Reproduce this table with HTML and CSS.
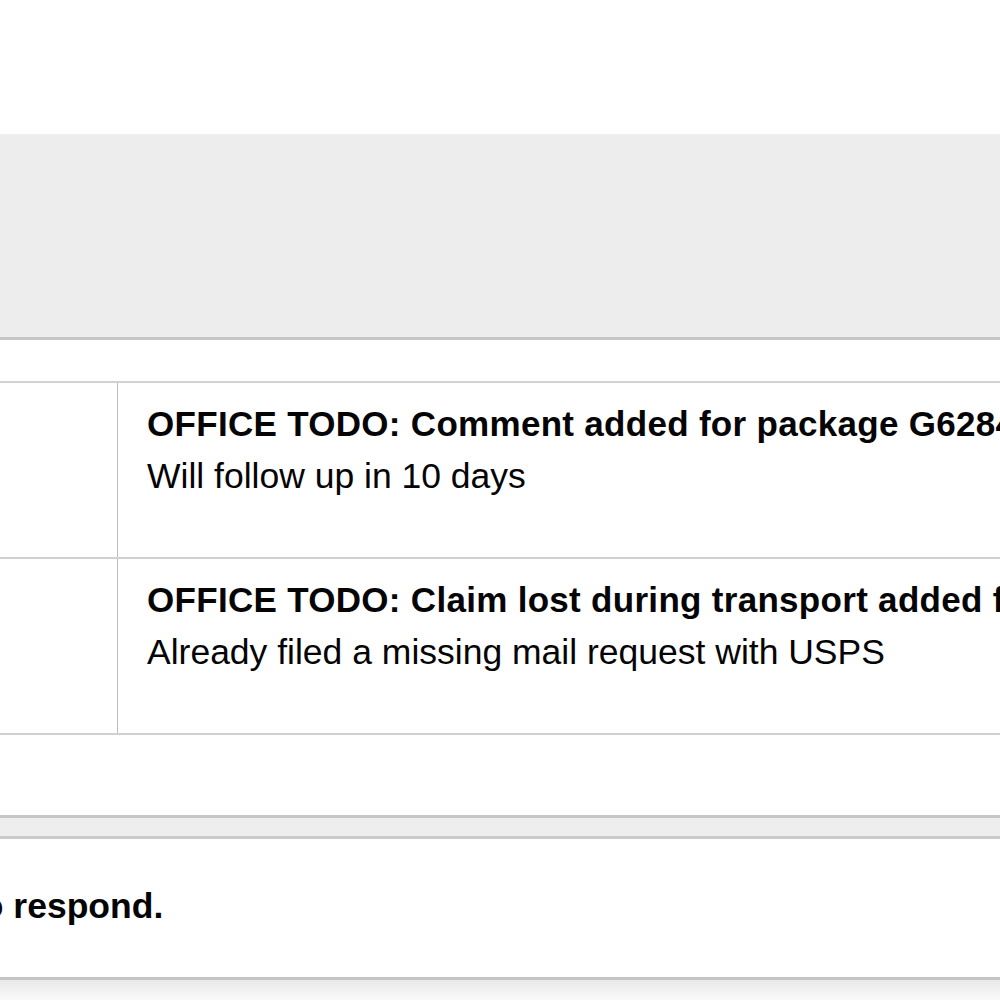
FILE: index.html
```html
<!DOCTYPE html>
<html lang="en">
<head>
  <meta charset="UTF-8">
  <meta name="viewport" content="width=device-width, initial-scale=1.0">
  <title>Office todo</title>
  <link rel="stylesheet" href="styles.css">
</head>
<body>
  <div class="page">
    <div class="top_space"></div>
    <header class="head_bar"></header>

    <section class="todo_list">
      <div class="todo_row">
        <div class="todo_side"></div>
        <div class="todo_body">
          <p class="todo_title">OFFICE TODO: Comment added for package G62847310</p>
          <p class="todo_text">Will follow up in 10 days</p>
        </div>
      </div>
      <div class="todo_row">
        <div class="todo_side"></div>
        <div class="todo_body">
          <p class="todo_title">OFFICE TODO: Claim lost during transport added for package G62847310</p>
          <p class="todo_text">Already filed a missing mail request with USPS</p>
        </div>
      </div>
    </section>

    <div class="divider_bar"></div>

    <footer class="foot_msg">
      <p>to respond.</p>
    </footer>
    <div class="foot_shade"></div>
  </div>
</body>
</html>
```

FILE: styles.css
```css
* {margin: 0; padding: 0; box-sizing: border-box;}
html, body {background: #fff; overflow: hidden;}
body {font-family: "Liberation Sans", Arial, Helvetica, sans-serif; color: #050505;}

.page {width: 1000px; height: 1000px; overflow: hidden;}
.top_space {height: 134px;}
.head_bar {height: 206px; background: #ededed; border-top: 1px solid #f1f1f1; border-bottom: 3px solid #c6c6c6;}

.todo_list {margin-top: 41px; border-top: 2px solid #d2d2d2;}
.todo_list .todo_row {display: flex; height: 176px; border-bottom: 2px solid #d0d0d0;}
.todo_list .todo_row .todo_side {width: 118px; flex: none; border-right: 1px solid #bdbdbd;}
.todo_list .todo_row .todo_body {flex: 1; min-width: 0; padding: 15px 0 0 29px; white-space: nowrap; overflow: hidden;}
.todo_list .todo_title {font-size: 35px; font-weight: bold; line-height: 52px; letter-spacing: 0.3px;}
.todo_list .todo_text {font-size: 35.5px; line-height: 52px;}

.divider_bar {margin-top: 80px; height: 24px; background: #eeeeee; border-top: 3px solid #c6c6c6; border-bottom: 3px solid #cbcbcb;}

.foot_msg {height: 138px; padding-top: 47px;}
.foot_msg p {font-size: 35.5px; font-weight: bold; line-height: 40px; text-indent: -30px; white-space: nowrap;}

.foot_shade {height: 23px; border-top: 3px solid #c4c4c4; background: linear-gradient(#e9e9e9, #f9f9f9);}
```
